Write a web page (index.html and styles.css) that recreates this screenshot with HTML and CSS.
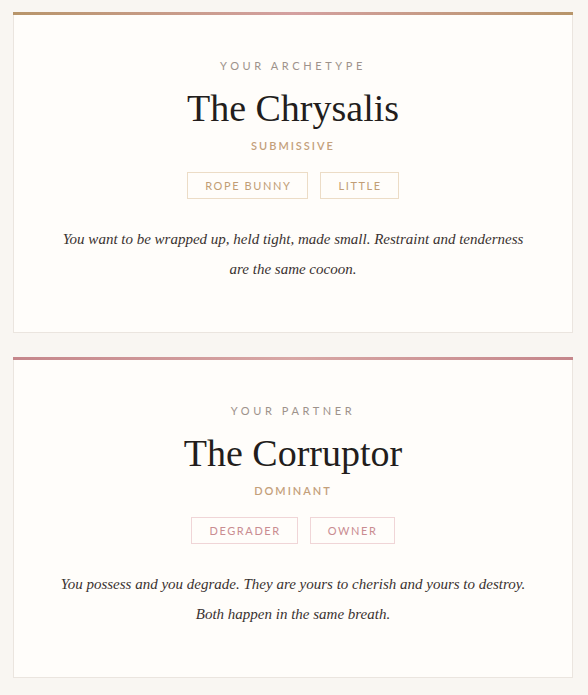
FILE: index.html
```html
<!DOCTYPE html>
<html>
<head>
<meta charset="utf-8">
<link rel="stylesheet" href="styles.css">
</head>
<body>
<main class="stack">
  <section class="card card-self">
    <div class="bar"></div>
    <div class="card-body">
      <p class="eyebrow">Your Archetype</p>
      <h2 class="title">The Chrysalis</h2>
      <p class="role">Submissive</p>
      <div class="tags">
        <span class="tag">Rope Bunny</span>
        <span class="tag">Little</span>
      </div>
      <p class="desc">You want to be wrapped up, held tight, made small. Restraint and tenderness are the same cocoon.</p>
    </div>
  </section>
  <section class="card card-partner">
    <div class="bar"></div>
    <div class="card-body">
      <p class="eyebrow">Your Partner</p>
      <h2 class="title">The Corruptor</h2>
      <p class="role">Dominant</p>
      <div class="tags">
        <span class="tag">Degrader</span>
        <span class="tag">Owner</span>
      </div>
      <p class="desc">You possess and you degrade. They are yours to cherish and yours to destroy. Both happen in the same breath.</p>
    </div>
  </section>
</main>
</body>
</html>
```

FILE: styles.css
```css
html, body {
  margin: 0;
  padding: 0;
  background: #f9f6f2;
}
body {
  font-family: "Liberation Serif", serif;
}
.stack {
  display: flex;
  flex-direction: column;
  gap: 24px;
  padding: 12px 15px 16px 13px;
}
.card {
  background: #fffdfa;
  border: 1px solid #ebe5df;
  border-top: none;
  height: 321px;
  box-sizing: border-box;
  display: flex;
  flex-direction: column;
}
.bar {
  height: 3px;
  margin: 0 -1px;
}
.card-self .bar {
  background: linear-gradient(90deg, #b8956a 0%, #d4a0a0 50%, #b8956a 100%);
}
.card-partner .bar {
  background: linear-gradient(90deg, #c5868b 0%, #d8a7a5 50%, #c5868b 100%);
}
.card-body {
  display: flex;
  flex-direction: column;
  align-items: center;
  padding: 44px 40px 0;
}
.eyebrow {
  margin: 0;
  font-family: Lato, "Open Sans", sans-serif;
  font-size: 11px;
  line-height: 14px;
  letter-spacing: 3.6px;
  text-transform: uppercase;
  color: #9d928b;
}
.title {
  margin: 13px 0 0;
  font-weight: normal;
  font-size: 38px;
  line-height: 44px;
  color: #231d1c;
}
.role {
  margin: 9px 0 0;
  font-family: Lato, "Open Sans", sans-serif;
  font-size: 11px;
  line-height: 14px;
  letter-spacing: 2px;
  text-transform: uppercase;
  color: #c4a07a;
  font-weight: 600;
}
.tags {
  display: flex;
  gap: 12px;
  margin-top: 19px;
}
.tag {
  font-family: Lato, "Open Sans", sans-serif;
  font-size: 11px;
  line-height: 25px;
  letter-spacing: 1.6px;
  text-transform: uppercase;
  padding: 0 16px 0 17px;
  border: 1px solid #ecdcc6;
  color: #c19d75;
}
.card-partner .tag {
  border-color: #f0d5d7;
  color: #c98c91;
}
.desc {
  margin: 25px 0 0;
  font-style: italic;
  font-size: 15px;
  line-height: 30px;
  text-align: center;
  color: #3a3230;
}
```
